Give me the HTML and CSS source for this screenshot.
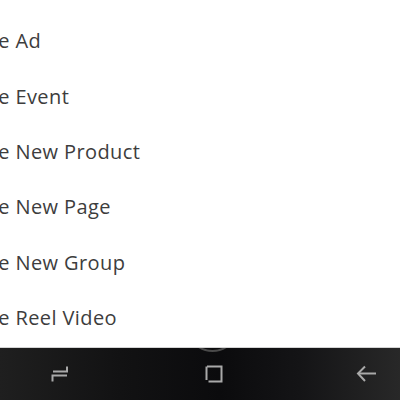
FILE: index.html
```html
<!DOCTYPE html>
<html>
<head>
<meta charset="utf-8">
<link rel="stylesheet" href="styles.css">
</head>
<body>
<div class="screen">
  <ul class="menu">
    <li class="item"><span class="label">Create Ad</span></li>
    <li class="item"><span class="label">Create Event</span></li>
    <li class="item"><span class="label">Create New Product</span></li>
    <li class="item"><span class="label">Create New Page</span></li>
    <li class="item"><span class="label">Create New Group</span></li>
    <li class="item"><span class="label">Create Reel Video</span></li>
  </ul>
  <nav class="navbar">
    <div class="fab-ring"></div>
    <svg class="nav-icon recents" width="18" height="18" viewBox="0 0 18 18">
      <path d="M16 1.5V6.5H2" fill="none" stroke="#a9a9a9" stroke-width="2"/>
      <path d="M16 10.5H1.5V16.5" fill="none" stroke="#a9a9a9" stroke-width="2"/>
    </svg>
    <svg class="nav-icon home" width="18" height="18" viewBox="0 0 18 18">
      <path d="M2 1.5H16.5V16.5H3.5" fill="none" stroke="#a9a9a9" stroke-width="2"/>
      <path d="M1.5 1.5V15" fill="none" stroke="#a9a9a9" stroke-width="2"/>
    </svg>
    <svg class="nav-icon back" width="22" height="18" viewBox="0 0 22 18">
      <path d="M20 8.5H2.5" fill="none" stroke="#a9a9a9" stroke-width="2"/>
      <path d="M9 1.5L2 8.5L9 16" fill="none" stroke="#a9a9a9" stroke-width="2"/>
    </svg>
  </nav>
</div>
</body>
</html>
```
FILE: styles.css
```css
html, body {
  margin: 0;
  padding: 0;
  background: #ffffff;
}
.screen {
  width: 400px;
  height: 400px;
  display: flex;
  flex-direction: column;
  overflow: hidden;
}
.menu {
  list-style: none;
  margin: 0;
  padding: 13px 0 0 0;
  flex: 1;
  overflow: hidden;
}
.item {
  height: 55.4px;
  display: flex;
  align-items: center;
  font-family: "Open Sans", "DejaVu Sans", sans-serif;
  font-size: 20px;
  letter-spacing: 0.4px;
  color: #3d3d3d;
  white-space: nowrap;
}
.label {
  margin-left: -54px;
}
.navbar {
  position: relative;
  height: 52px;
  border-top: 1px solid #d4d4d4;
  background: linear-gradient(90deg, #1f1f1f 0%, #121213 30%, #0b0b0d 55%, #141416 75%, #282828 100%);
  display: flex;
  align-items: center;
  overflow: hidden;
}
.fab-ring {
  position: absolute;
  left: 186px;
  top: -49px;
  width: 53px;
  height: 53px;
  border-radius: 50%;
  border: 2px solid #4a4a4a;
  box-sizing: border-box;
}
.nav-icon {
  display: block;
}
.recents {
  margin-left: 51px;
}
.home {
  margin-left: 136px;
}
.back {
  margin-left: 133px;
}
```
